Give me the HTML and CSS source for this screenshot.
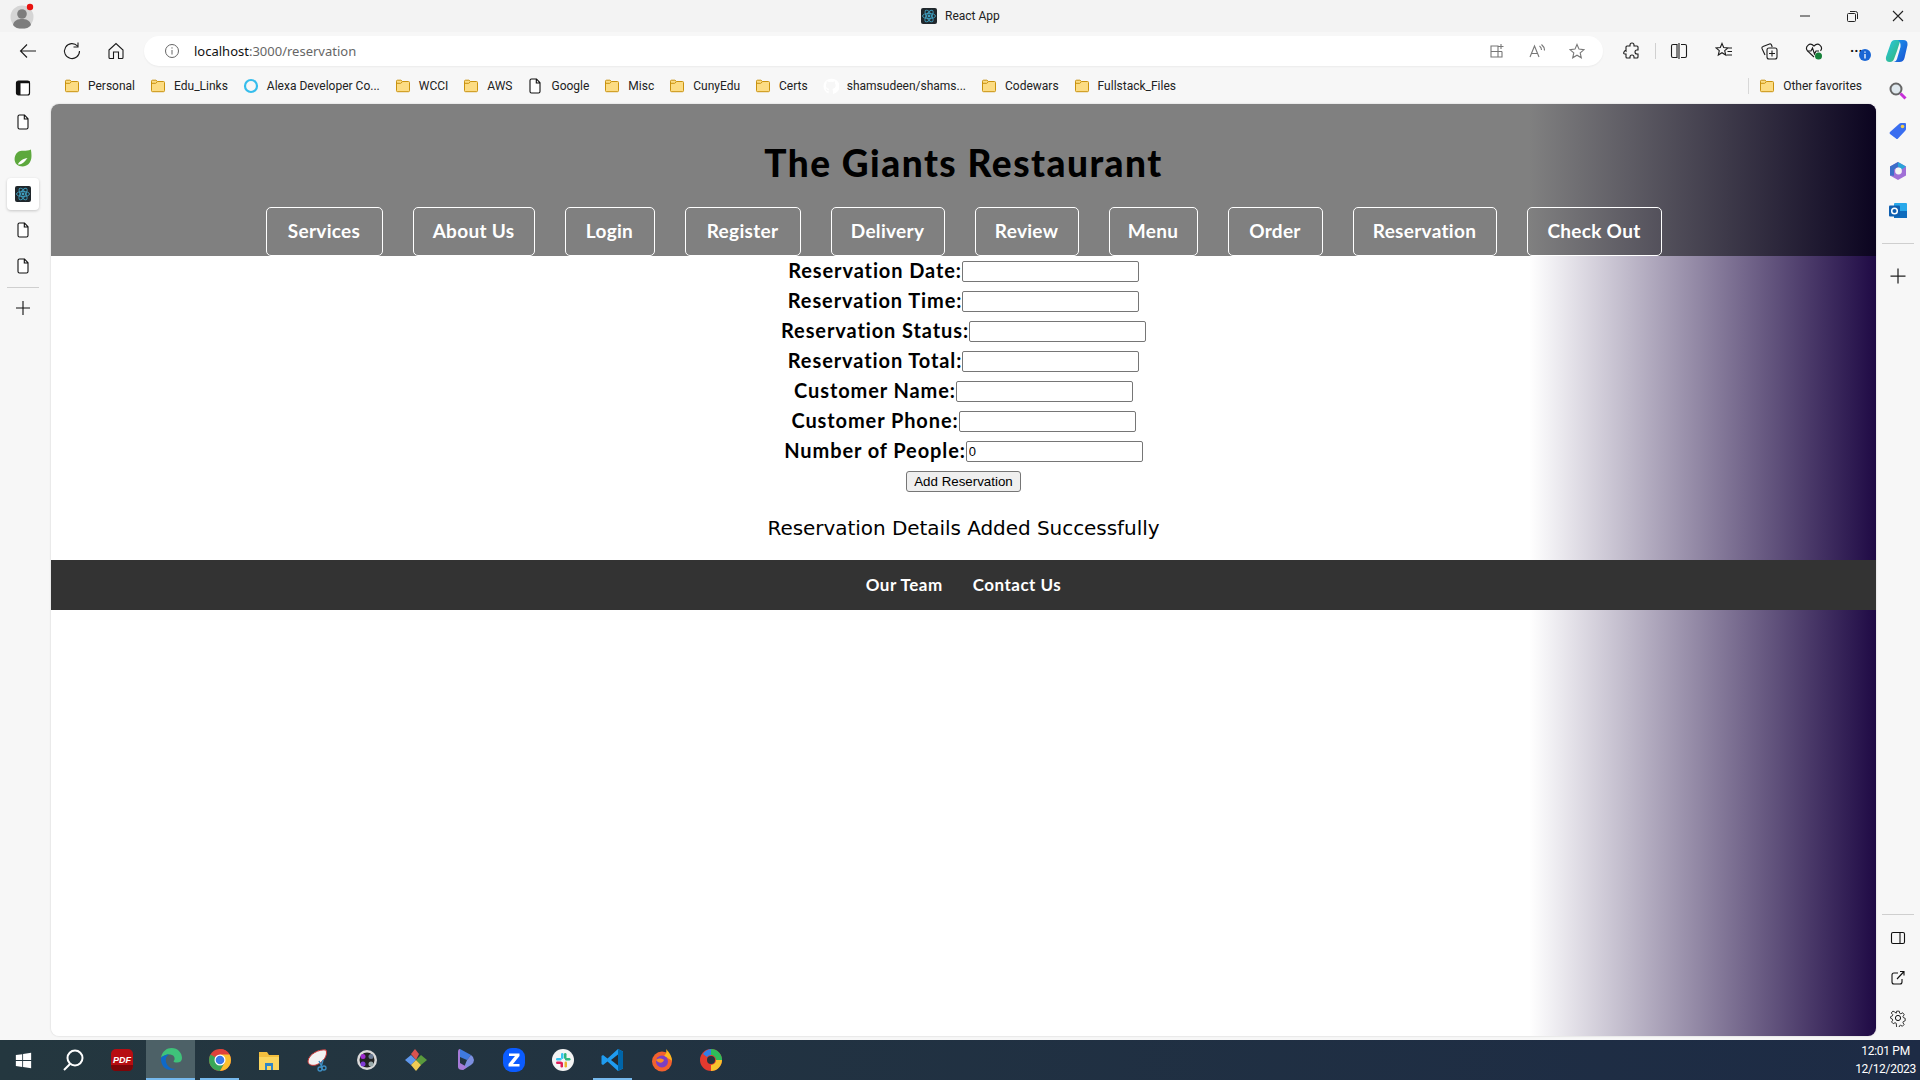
FILE: index.html
```html
<!DOCTYPE html>
<html>

<head>
    <meta charset="UTF-8">
    <title>React App</title>
    <link rel="stylesheet" href="styles.css">
</head>
<body>
    <svg width="0" height="0" class="defs">
        <symbol id="folder" viewBox="0 0 16 16">
            <path d="M1.5 3.2q0-1 1-1h3.4l1.6 1.3h6q1 0 1 1v8.2q0 1-1 1h-11q-1 0-1-1z" fill="#fcdc83" stroke="#c9920e"/>
            <path d="M1.5 5.300h4.200l1.800-1.600" fill="none" stroke="#c9920e"/>
        </symbol>
        <symbol id="page" viewBox="0 0 16 16">
            <path d="M3 2.500q0-1.500 1.500-1.500h5L13 4.800v8.700q0 1.500-1.500 1.500h-7Q3 15 3 13.500zM9.300 1v4H13" fill="#fff" stroke="#111" stroke-width="1.100"/>
        </symbol>
        <symbol id="react" viewBox="0 0 16 16">
            <rect width="16" height="16" rx="2" fill="#20272c"/>
            <g fill="none" stroke="#3f9fc0" stroke-width=".9">
                <ellipse cx="8" cy="8" rx="6.500" ry="2.600"/>
                <ellipse cx="8" cy="8" rx="6.500" ry="2.600" transform="rotate(60 8 8)"/>
                <ellipse cx="8" cy="8" rx="6.500" ry="2.600" transform="rotate(120 8 8)"/>
            </g>
            <circle cx="8" cy="8" r="1.400" fill="#3f9fc0"/>
        </symbol>
    </svg>

    <div class="window">
        <div class="titlebar">
            <svg class="avatar" viewBox="0 0 24 26">
                <circle cx="12" cy="14" r="11.500" fill="#d5d5d5"/>
                <circle cx="12" cy="11" r="4.800" fill="#7d7d7d"/>
                <path d="M3 22c1-5 5-6 9-6s8 1 9 6c-2 3-5 3.500-9 3.500s-7-.5-9-3.500z" fill="#7d7d7d"/>
                <circle cx="20" cy="4" r="3.200" fill="#e8120f"/>
            </svg>
            <div class="tab-title">
                <svg class="ico16"><use href="#react"/></svg>
                <span>React App</span>
            </div>
            <div class="win-btns">
                <svg class="ico16" viewBox="0 0 16 16"><path d="M3 8h10" stroke="#222" fill="none"/></svg>
                <svg class="ico16" viewBox="0 0 16 16"><path d="M4.500 5.500h6q1 0 1 1v6q0 1-1 1h-6q-1 0-1-1v-6q0-1 1-1zM6 3.500h5.500q2 0 2 2V11" stroke="#222" fill="none"/></svg>
                <svg class="ico16" viewBox="0 0 16 16"><path d="M3 3l10 10M13 3L3 13" stroke="#222" fill="none" stroke-width="1.100"/></svg>
            </div>
        </div>

        <div class="toolbar">
            <svg class="tb-ico" viewBox="0 0 20 20"><path d="M18 10H2.500M9 3.500L2.500 10 9 16.500" class="ln"/></svg>
            <svg class="tb-ico" viewBox="0 0 20 20"><path d="M15.500 5A7.500 7.500 0 1 0 17.500 10M16 1.500V6h-4.500" class="ln"/></svg>
            <svg class="tb-ico" viewBox="0 0 20 20"><path d="M3 9l7-6.500L17 9v7.500q0 1-1 1h-3.500V11h-5v6.500H4q-1 0-1-1z" class="ln"/></svg>
            <div class="addr">
                <svg class="ico16 info" viewBox="0 0 16 16"><circle cx="8" cy="8" r="6.500" fill="none" stroke="#666"/><path d="M8 7v4.500M8 4.300v1.300" stroke="#666" fill="none"/></svg>
                <span class="url"><span class="host">localhost</span>:3000/reservation</span>
                <svg class="ico16 addr-end" viewBox="0 0 16 16"><path d="M2 3h7v11H2zM2 8.500h11M9 8.500V14h4V8.500M12 1v5M9.500 3.500h5" class="ln gray"/></svg>
                <svg class="ico16 addr-end" viewBox="0 0 16 16"><path d="M1 14L5.500 3 10 14M2.800 10.500h5.500M10.500 3q2 1.500 2 4M12.500 1.500q3 2.500 3 6" class="ln gray"/></svg>
                <svg class="ico16 addr-end" viewBox="0 0 16 16"><path d="M8 1.500l2 4.600 5 .5-3.800 3.300 1.100 4.900L8 12.200l-4.300 2.600 1.100-4.900L1 6.600l5-.5z" class="ln gray"/></svg>
            </div>
            <div class="tb-right">
                <svg class="tb-ico s18" viewBox="0 0 18 18"><path d="M7 3q0-2 2-2t2 2v1h3q1 0 1 1v3h-1q-2 0-2 2t2 2h1v3q0 1-1 1h-3v-1q0-2-2-2t-2 2v1H4q-1 0-1-1v-3H2q-2 0-1-2t2-1V5q0-1 1-1h3z" class="ln"/></svg>
                <i class="tb-sep"></i>
                <svg class="tb-ico s18" viewBox="0 0 18 18"><path d="M7 2.500H3q-1.500 0-1.500 1.500v10q0 1.500 1.500 1.500h4zM11 2.500h4q1.500 0 1.500 1.500v10q0 1.500-1.500 1.500h-4M9 1v16" class="ln"/></svg>
                <svg class="tb-ico s18" viewBox="0 0 18 18"><path d="M7 1.500l1.700 4 4.300.4-3.300 2.800 1 4.300L7 10.700l-3.700 2.300 1-4.300L1 5.900l4.300-.4zM12 6h5M12.500 9.500H17M11.500 13H17" class="ln"/></svg>
                <svg class="tb-ico s18" viewBox="0 0 18 18"><path d="M5 13L2 6.500q-.5-1.500 1-2L9.500 2q1.500-.5 2 1l.7 2M7 8q0-2 2-2h6q2 0 2 2v7q0 2-2 2H9q-2 0-2-2zM12 8.500v6M9 11.500h6" class="ln"/></svg>
                <svg class="tb-ico s18" viewBox="0 0 18 18">
                    <path d="M9 15L2.500 8.800C-.5 5 4.500-.5 9 4c4.500-4.500 9.500 1 6.500 4.800" class="ln"/>
                    <path d="M2.500 9h3.500l1.500-3 2 6 1.500-3h3" class="ln"/>
                    <circle cx="13.500" cy="14" r="3.500" fill="#17813a"/>
                </svg>
                <div class="more">
                    <span>···</span>
                    <svg viewBox="0 0 12 12" class="more-badge"><circle cx="6" cy="6" r="6" fill="#1a66d4"/><path d="M6 5v4.500M6 2.500v1.200" stroke="#fff" fill="none" stroke-width="1.300"/></svg>
                </div>
                <svg class="copilot" viewBox="0 0 24 24">
                    <defs>
                        <linearGradient id="cp1" x1="0" y1="0" x2="1" y2="1"><stop offset="0" stop-color="#27c7e8"/><stop offset="1" stop-color="#35b56a"/></linearGradient>
                        <linearGradient id="cp2" x1="0" y1="0" x2="1" y2="1"><stop offset="0" stop-color="#1b9cf0"/><stop offset="1" stop-color="#1a4fd0"/></linearGradient>
                    </defs>
                    <path d="M5.500 5Q6.500 1 10 1h5.500L12 12l-3 8q-1 3-4 3-5 0-4-5z" fill="url(#cp1)"/>
                    <path d="M13 1h5q5 0 4.500 5l-3 13q-1 4-5 4H8q3 0 4-3l3.500-12Q16 3 13 1z" fill="url(#cp2)"/>
                </svg>
            </div>
        </div>

        <div class="lower">
            <div class="rail-left">
                <svg class="rail-ico rail-first" viewBox="0 0 16 16"><rect x="1.500" y="1" width="13" height="14" rx="2" fill="#fff" stroke="#111" stroke-width="1.200"/><path d="M1.500 3q0-2 2-2h11v2.300H5.500V15h-2q-2 0-2-2z" fill="#111"/></svg>
                <svg class="rail-ico"><use href="#page"/></svg>
                <svg class="rail-ico spring" viewBox="0 0 16 16"><path d="M15 .5c1 6 .8 10-2 12.800C10 16.300 5 16 2.300 13.500-.5 10.500.2 5.500 3 3c3-2.500 8-.5 12-2.500z" fill="#5da83d"/><path d="M3.500 13.500C5 10.500 8.500 8.500 12 8c-2 2.500-4 5.500-7.500 5.800z" fill="#fff"/></svg>
                <span class="rail-active"><svg class="rail-ico"><use href="#react"/></svg></span>
                <svg class="rail-ico"><use href="#page"/></svg>
                <svg class="rail-ico"><use href="#page"/></svg>
                <i class="rail-sep"></i>
                <svg class="rail-ico" viewBox="0 0 16 16"><path d="M8 1v14M1 8h14" stroke="#111" fill="none" stroke-width="1.100"/></svg>
            </div>

            <div class="center">
                <div class="bookmarks">
                    <a class="bm"><svg class="ico16"><use href="#folder"/></svg>Personal</a>
                    <a class="bm"><svg class="ico16"><use href="#folder"/></svg>Edu_Links</a>
                    <a class="bm"><svg class="ico16" viewBox="0 0 16 16"><circle cx="8" cy="8" r="6" fill="none" stroke="#35bdec" stroke-width="2.200"/></svg>Alexa Developer Co...</a>
                    <a class="bm"><svg class="ico16"><use href="#folder"/></svg>WCCI</a>
                    <a class="bm"><svg class="ico16"><use href="#folder"/></svg>AWS</a>
                    <a class="bm"><svg class="ico16"><use href="#page"/></svg>Google</a>
                    <a class="bm"><svg class="ico16"><use href="#folder"/></svg>Misc</a>
                    <a class="bm"><svg class="ico16"><use href="#folder"/></svg>CunyEdu</a>
                    <a class="bm"><svg class="ico16"><use href="#folder"/></svg>Certs</a>
                    <a class="bm"><svg class="ico16" viewBox="0 0 16 16"><path d="M8 .8a7.500 7.500 0 0 0-2.400 14.600v-2.500c-2 .4-2.500-1-2.700-1.500-.8-1-.1-1 .6-.7.5.3.9 1 1.100 1.200.7.900 1.500.5 1.100.3 0-.8.400-1.100.600-1.300-1.800-.2-3.400-1-3.400-3.600 0-.8.300-1.500.8-2 0-.3-.3-1 .1-2 0 0 .6-.2 2.100.8a7 7 0 0 1 3.800 0c1.500-1 2.100-.8 2.100-.8.400 1 .1 1.700.1 2 .5.500.8 1.200.8 2 0 2.600-1.600 3.400-3.400 3.600.3.300.6.700.6 1.500v3.500A7.500 7.500 0 0 0 8 .8z" fill="#fff"/></svg>shamsudeen/shams...</a>
                    <a class="bm"><svg class="ico16"><use href="#folder"/></svg>Codewars</a>
                    <a class="bm"><svg class="ico16"><use href="#folder"/></svg>Fullstack_Files</a>
                    <div class="bm-other">
                        <a class="bm"><svg class="ico16"><use href="#folder"/></svg>Other favorites</a>
                    </div>
                </div>

                <div class="page">
                    <div class="header">
                        <h1>The Giants Restaurant</h1>
                        <nav class="nav">
                            <a class="nav-btn">Services</a>
                            <a class="nav-btn">About Us</a>
                            <a class="nav-btn">Login</a>
                            <a class="nav-btn">Register</a>
                            <a class="nav-btn">Delivery</a>
                            <a class="nav-btn">Review</a>
                            <a class="nav-btn">Menu</a>
                            <a class="nav-btn">Order</a>
                            <a class="nav-btn">Reservation</a>
                            <a class="nav-btn">Check Out</a>
                        </nav>
                    </div>

                    <form class="res-form">
                        <div class="row"><label>Reservation Date:</label><input type="text"></div>
                        <div class="row"><label>Reservation Time:</label><input type="text"></div>
                        <div class="row"><label>Reservation Status:</label><input type="text"></div>
                        <div class="row"><label>Reservation Total:</label><input type="text"></div>
                        <div class="row"><label>Customer Name:</label><input type="text"></div>
                        <div class="row"><label>Customer Phone:</label><input type="text"></div>
                        <div class="row"><label>Number of People:</label><input type="text" value="0"></div>
                        <button type="button" class="add-btn">Add Reservation</button>
                    </form>
                    <p class="msg">Reservation Details Added Successfully</p>

                    <footer class="footer">
                        <a>Our Team</a>
                        <a>Contact Us</a>
                    </footer>
                </div>
            </div>

            <div class="rail-right">
                <svg class="rr-ico" viewBox="0 0 20 20"><circle cx="8" cy="8" r="5.500" fill="#dfe8ee" stroke="#666" stroke-width="2"/><path d="M12.500 12.500l5 5" stroke="#c62fd8" stroke-width="3" fill="none"/></svg>
                <svg class="rr-ico" viewBox="0 0 20 20"><path d="M2 11L11 3q1-1 2-1h4q1 0 1 1v5q0 1-1 2l-7 7.500q-1 1-2 0L2 13q-1-1 0-2z" fill="#3a6ef0"/><circle cx="14.500" cy="5.500" r="1.800" fill="#f3cd4a"/></svg>
                <svg class="rr-ico" viewBox="0 0 20 20"><path d="M10 1l8 4.500v9L10 19l-8-4.500v-9z" fill="#a06fd6"/><path d="M10 1l8 4.500-4 2.700L10 6z" fill="#2aa3d8"/><path d="M2 5.500L10 1v5L6 8.500v6.300l-4-.3z" fill="#3c6ec9"/><circle cx="10.500" cy="10" r="3.400" fill="#f4f4f4"/></svg>
                <svg class="rr-ico" viewBox="0 0 20 20"><rect x="6" y="2" width="13" height="15" rx="1" fill="#28a8ea"/><path d="M6 10h13v7H6z" fill="#0f6cbd"/><rect x="1" y="4.500" width="11" height="11" rx="1" fill="#0f5fb0"/><circle cx="6.500" cy="10" r="2.800" fill="none" stroke="#fff" stroke-width="1.500"/></svg>
                <i class="rail-sep wide"></i>
                <svg class="rr-ico" viewBox="0 0 16 16"><path d="M8 2v12M2 8h12" stroke="#222" fill="none"/></svg>
                <div class="rr-bottom">
                    <i class="rail-sep tight"></i>
                    <svg class="rr-ico s16" viewBox="0 0 16 16"><rect x="1.500" y="2.500" width="13" height="11" rx="1.500" fill="none" stroke="#111" stroke-width="1.100"/><path d="M10 2.500v11" stroke="#111" fill="none" stroke-width="1.100"/></svg>
                    <svg class="rr-ico s16" viewBox="0 0 16 16"><path d="M8 3H4q-2 0-2 2v7q0 2 2 2h6q2 0 2-2V9M7 9l7-7.500M10 1.500h4v4" fill="none" stroke="#111" stroke-width="1.100"/></svg>
                    <svg class="rr-ico s16 gear" viewBox="0 0 18 18"><circle cx="9" cy="9" r="2.600" fill="none" stroke="#111"/><path d="M7.500 1h3l.5 2.400 1.400.7 2.200-1.200 1.800 2.300-1.500 1.900.4 1.400 2.200 1v2.800l-2.200 1-.4 1.400 1.300 2-2 2.100-2-1.200-1.500.7-.4 2.200H7.500L7 15.300l-1.400-.7-2.100 1.200-2-2.100 1.300-2-.4-1.400-2-1V7.500l2.100-1 .4-1.400L1.100 3.200l2-2.300 2.200 1.200L7 3.400z" fill="none" stroke="#111" transform="translate(1.300 1.300) scale(.85)"/></svg>
                </div>
            </div>
        </div>

        <div class="taskbar">
            <svg class="tk-ico start" viewBox="0 0 20 20"><path d="M1 3.500l7.500-1v7H1zM9.500 2.300L19 1v8.500H9.500zM1 10.500h7.500v7l-7.500-1zM9.500 10.500H19V19l-9.500-1.300z" fill="#fff"/></svg>
            <span class="tk"><svg class="tk-ico" viewBox="0 0 24 24"><circle cx="14" cy="10" r="7.500" fill="none" stroke="#fff" stroke-width="2"/><path d="M9 16l-6 6" stroke="#fff" stroke-width="2" fill="none"/></svg></span>
            <span class="tk"><svg class="tk-ico" viewBox="0 0 24 24"><rect x="1" y="1" width="22" height="22" rx="5" fill="#b70d12"/><path d="M1 17h22v1q0 5-5 5H6q-5 0-5-5z" fill="#7c0508"/><text x="12" y="15" class="pdf">PDF</text></svg></span>
            <span class="tk tk-on">
                <svg class="tk-ico" viewBox="0 0 24 24"><path d="M2 11C3 4 8 1 12.500 1 19 1 23 6 23 11c0 3-2 4.500-5 4.500-2 0-3.500-.5-3.500-1.500 2-1 1.500-6-3-6.500C6 7 2.500 10 2 11z" fill="#3fc27a"/><path d="M2 11c.5-1 4-4 8.500-3.500-4 1-4.500 6-2.500 10 1.500 3 5 5 9 4-2 1-3.500 1.500-5.500 1.500C6 23 1.500 18 2 11z" fill="#0f69c8"/></svg>
            </span>
            <span class="tk tk-run">
                <svg class="tk-ico" viewBox="0 0 24 24"><circle cx="12" cy="12" r="11" fill="#d9473a"/><path d="M12 12L2.500 6.500A11 11 0 0 0 12 23l6-11z" fill="#3aa757"/><path d="M12 1a11 11 0 0 1 9.500 5.500H12L2.500 6.500z" fill="#e0403a"/><path d="M21.500 6.500A11 11 0 0 1 12 23l4.800-8.500L12 6.500z" fill="#fbc02d"/><circle cx="12" cy="12" r="5.500" fill="#fff"/><circle cx="12" cy="12" r="4.300" fill="#3b78e7"/></svg>
            </span>
            <span class="tk"><svg class="tk-ico" viewBox="0 0 24 24"><path d="M2 4h8l2 3h10v15H2z" fill="#f3bf3e"/><path d="M2 9h20v13H2z" fill="#fbd65f"/><path d="M8 15h8v7h-2v-4h-4v4H8z" fill="#2f86c7"/></svg></span>
            <span class="tk"><svg class="tk-ico" viewBox="0 0 24 24"><path d="M2 13C3 6 13 1 20 2c2 5-2 12-10 15-4 1-8 0-8-4z" fill="#f2f2f2" stroke="#c33" stroke-width="1"/><path d="M13 13l3 6M17 12l-2 7" stroke="#3d8fc4" stroke-width="1.500" fill="none"/><circle cx="14" cy="21" r="2" fill="none" stroke="#3d8fc4" stroke-width="1.300"/><circle cx="18" cy="20" r="2" fill="none" stroke="#3d8fc4" stroke-width="1.300"/></svg></span>
            <span class="tk"><svg class="tk-ico" viewBox="0 0 24 24"><circle cx="12" cy="12" r="10" fill="#d9d9d9"/><circle cx="12" cy="12" r="7.500" fill="#222"/><circle cx="8" cy="8.500" r="2.500" fill="#a02bd0"/><circle cx="16" cy="8.500" r="2.500" fill="#6c7d96"/><circle cx="8" cy="16" r="2.500" fill="#7f39d5"/><circle cx="16" cy="16" r="2.500" fill="#9aa"/></svg></span>
            <span class="tk"><svg class="tk-ico" viewBox="0 0 24 24"><path d="M12 12L7 6l4-5 4 5z" fill="#d9534f"/><path d="M12 12l5-5 6 5-6 5z" fill="#5a9a3c"/><path d="M12 12l-5-5-6 5 6 5z" fill="#5f97ec"/><path d="M12 12l5 5-5 6-5-6z" fill="#f0cb54"/></svg></span>
            <span class="tk"><svg class="tk-ico" viewBox="0 0 24 24"><path d="M7 1l11 6-4 5-7-3z" fill="#3f7be0"/><path d="M18 7q3 2 3 5t-3 5l-8 5 4-10z" fill="#7c8fe0"/><path d="M7 1Q5 1 5 4v15q0 3 5 3l4-3-7-4z" fill="#a67bd8"/></svg></span>
            <span class="tk"><svg class="tk-ico" viewBox="0 0 24 24"><rect x="1" y="0" width="22" height="24" rx="9" fill="#0b5cff"/><path d="M7 5.500h10.500v2.500L11 16h6.500v2.500H6.500V16L13 8H7z" fill="#fff"/></svg></span>
            <span class="tk"><svg class="tk-ico" viewBox="0 0 24 24"><circle cx="12" cy="12" r="11" fill="#f4f4f4"/><rect x="10" y="5" width="2.500" height="6" rx="1.200" fill="#36c5f0"/><rect x="5" y="10" width="5.500" height="2.500" rx="1.200" fill="#36c5f0"/><rect x="13" y="5" width="2.500" height="6" rx="1.200" fill="#2eb67d"/><rect x="14" y="10" width="5.500" height="2.500" rx="1.200" fill="#2eb67d"/><rect x="13.500" y="13.500" width="2.500" height="6" rx="1.200" fill="#ecb22e"/><rect x="5" y="13.500" width="6" height="2.500" rx="1.200" fill="#e01e5a"/><rect x="9.500" y="14" width="2.500" height="5.500" rx="1.200" fill="#e01e5a"/></svg></span>
            <span class="tk tk-run">
                <svg class="tk-ico" viewBox="0 0 24 24"><path d="M17 1l5 2.500v17L17 23 6.500 13.500 2 17l-1.500-1v-8L2 7l4.500 3.500z" fill="#1f9cf0"/><path d="M17 6.500L10 12l7 5.500z" fill="#24292e"/><path d="M17 1l5 2.500v17L17 23z" fill="#0065a9"/></svg>
            </span>
            <span class="tk"><svg class="tk-ico" viewBox="0 0 24 24"><circle cx="12" cy="13.500" r="10" fill="#f2612e"/><path d="M16 1c3 3 6 7 6 12-3-3-5-3-8-5 2-2 3-4 2-7z" fill="#ffb61e"/><circle cx="12" cy="13.500" r="6" fill="#7b3fc4"/><path d="M6 12c2-2 6-2 8 0-1 3-5 4-8 0z" fill="#fb8f22"/></svg></span>
            <span class="tk"><svg class="tk-ico" viewBox="0 0 24 24"><circle cx="12" cy="12" r="11" fill="#e33a2f"/><path d="M12 1a11 11 0 0 1 11 11h-6a5 5 0 0 0-5-5z" fill="#2dbd5a"/><path d="M23 12a11 11 0 0 1-11 11v-6a5 5 0 0 0 5-5z" fill="#f7c32d"/><path d="M4 6a11 11 0 0 1 8-5v6a5 5 0 0 0-4 2z" fill="#2f7fe8"/><circle cx="12" cy="12" r="4" fill="#24343d"/></svg></span>
            <div class="clock">
                <span>12:01 PM</span>
                <span>12/12/2023</span>
            </div>
        </div>
    </div>
</body>

</html>
```

FILE: styles.css
```css
*{
    box-sizing:border-box;
}
body{
    margin:0;
    font-family:Roboto,sans-serif;
}
.defs{
    position:absolute;
}
.window{
    width:1920px;
    height:1080px;
    display:flex;
    flex-direction:column;
    background:#f7f7f7;
    overflow:hidden;
}
.ln{
    fill:none;
    stroke:#1c1c1c;
    stroke-width:1.1;
}
.gray{
    stroke:#777;
}
.ico16{
    width:16px;
    height:16px;
    flex:none;
}

/* title bar */
.titlebar{
    height:32px;
    flex:none;
    background:#f3f3f3;
    display:flex;
    align-items:center;
    position:relative;
}
.avatar{
    width:24px;
    height:26px;
    margin-left:10px;
}
.tab-title{
    position:absolute;
    left:921px;
    top:8px;
    display:flex;
    align-items:center;
    gap:8px;
    font-size:12px;
    color:#222;
}
.win-btns{
    margin-left:auto;
    width:138px;
    display:flex;
    justify-content:space-between;
    padding:0 14px 0 15px;
    gap:30px;
}

/* toolbar */
.toolbar{
    height:38px;
    flex:none;
    display:flex;
    align-items:center;
    background:#f7f7f7;
    padding-left:18px;
    gap:24px;
}
.tb-ico{
    width:20px;
    height:20px;
    flex:none;
}
.tb-ico.s18{
    width:18px;
    height:18px;
}
.addr{
    width:1459px;
    height:30px;
    margin-left:-6px;
    background:#fff;
    border-radius:15px;
    display:flex;
    align-items:center;
    padding-left:20px;
    padding-right:18px;
    box-shadow:0 1px 2px #0000000d;
}
.url{
    margin-left:14px;
    font-family:"Noto Sans",sans-serif;
    font-size:13px;
    color:#666;
    flex:1;
}
.host{
    color:#111;
}
.addr-end{
    margin-left:24px;
}
.tb-right{
    margin-left:-4px;
    display:flex;
    align-items:center;
    gap:27px;
}
.tb-sep{
    width:1px;
    height:16px;
    background:#d0d0d0;
    margin:0 -13px;
}
.more{
    position:relative;
    width:18px;
    font-size:14px;
    font-weight:700;
    color:#111;
    line-height:14px;
    margin-right:-10px;
}
.more-badge{
    position:absolute;
    left:9px;
    top:5px;
    width:12px;
    height:12px;
}
.copilot{
    width:24px;
    height:24px;
    flex:none;
}

/* everything under the toolbar, the rails reach up beside the bookmarks */
.lower{
    flex:1;
    min-height:0;
    display:flex;
}
.rail-left{
    width:51px;
    flex:none;
    display:flex;
    flex-direction:column;
    align-items:center;
    padding:10px 5px 0 0;
    gap:20px;
}
.rail-ico{
    width:16px;
    height:16px;
    flex:none;
}
.rail-first{
    margin-bottom:-2px;
}
.rail-ico.spring{
    width:18px;
    height:18px;
    margin:-1px 0;
}
.rail-active{
    width:32px;
    height:32px;
    margin:-8px 0;
    background:#fff;
    border-radius:4px;
    box-shadow:0 1px 3px #0003;
    display:flex;
    align-items:center;
    justify-content:center;
}
.rail-sep{
    width:32px;
    height:1px;
    background:#cfcfcf;
    flex:none;
    display:block;
    margin:-7px 0 -8px;
}
.rail-sep.wide{
    margin:2px 0;
}
.rail-sep.tight{
    margin:0 0 -9px;
}
.center{
    flex:1;
    min-width:0;
    display:flex;
    flex-direction:column;
}
.rail-right{
    width:44px;
    flex:none;
    display:flex;
    flex-direction:column;
    align-items:center;
    padding-top:11px;
    gap:20px;
}
.rr-ico{
    width:20px;
    height:20px;
    flex:none;
}
.rr-ico.s16{
    width:16px;
    height:16px;
}
.rr-ico.gear{
    width:18px;
    height:18px;
    margin:-1px 0;
}
.rr-bottom{
    margin-top:auto;
    margin-bottom:14px;
    display:flex;
    flex-direction:column;
    align-items:center;
    gap:24px;
}

/* bookmarks */
.bookmarks{
    height:34px;
    flex:none;
    display:flex;
    align-items:center;
    padding:0 14px 2px 13px;
    gap:15px;
}
.bm{
    display:flex;
    align-items:center;
    gap:8px;
    font-size:12px;
    color:#222;
    white-space:nowrap;
}
.bm-other{
    margin-left:auto;
    padding-left:10px;
    border-left:1px solid #d8d8d8;
}

/* the app */
.page{
    flex:1;
    margin-bottom:4px;
    border-radius:8px;
    overflow:hidden;
    background:linear-gradient(to right,#fff 81%,#1f0a45 100%);
    box-shadow:0 0 2px #0003;
}
.header{
    height:152px;
    background:linear-gradient(to right,#808080 81%,#0b0420 100%);
    text-align:center;
    overflow:hidden;
}
h1{
    margin:0;
    padding-top:37px;
    font-family:Lato,sans-serif;
    font-weight:900;
    font-size:37px;
    line-height:44px;
    letter-spacing:1.500px;
    color:#000;
}
.nav{
    margin-top:22px;
    display:grid;
    grid-template-columns:117px 122px 90px 116px 114px 104px 89px 95px 144px 135px;
    justify-content:center;
    gap:30px;
}
.nav-btn{
    height:49px;
    padding-bottom:2px;
    display:flex;
    align-items:center;
    justify-content:center;
    border:1px solid #fff;
    border-radius:5px;
    font-family:Lato,sans-serif;
    font-weight:700;
    font-size:19px;
    letter-spacing:.3px;
    color:#fff;
}
.res-form{
    display:flex;
    flex-direction:column;
    align-items:center;
}
.row{
    height:30px;
    display:flex;
    align-items:center;
}
.row label{
    padding-bottom:3px;
    font-family:Lato,sans-serif;
    font-weight:700;
    font-size:20px;
    letter-spacing:.9px;
    color:#000;
}
.row input{
    width:177px;
    height:21px;
    border:1px solid #767676;
    border-radius:2px;
    padding:1px 2px;
    font-family:"Liberation Sans",sans-serif;
    font-size:13px;
    background:#fff;
}
.add-btn{
    margin-top:5px;
    height:21px;
    width:115px;
    padding:0;
    border:1px solid #767676;
    border-radius:3px;
    background:#efefef;
    font-family:"Liberation Sans",sans-serif;
    font-size:13.333px;
    color:#000;
}
.msg{
    margin:0;
    padding-top:23px;
    height:68px;
    text-align:center;
    font-family:"DejaVu Sans",sans-serif;
    font-size:20px;
    line-height:26px;
    letter-spacing:-.05px;
    color:#000;
}
.footer{
    height:50px;
    padding-bottom:2px;
    background:#333;
    display:flex;
    justify-content:center;
    align-items:center;
    gap:30px;
    font-family:Lato,sans-serif;
    font-weight:700;
    font-size:17px;
    letter-spacing:.5px;
    color:#fff;
}

/* windows taskbar */
.taskbar{
    height:40px;
    flex:none;
    background:linear-gradient(to right,#24373f,#1d2b45);
    display:flex;
    align-items:center;
    padding-left:15px;
}
.tk-ico{
    width:24px;
    height:24px;
    flex:none;
}
.tk-ico.start{
    width:17px;
    height:17px;
    margin-right:16px;
}
.tk{
    width:49.100px;
    height:40px;
    position:relative;
    display:flex;
    align-items:center;
    justify-content:center;
    flex:none;
}
.tk-on{
    background:#4d6167;
    border-bottom:2px solid #76b9ed;
}
.tk-run::after{
    content:"";
    position:absolute;
    left:5px;
    right:5px;
    bottom:0;
    height:2px;
    background:#76b9ed;
}
.pdf{
    font-family:"Liberation Sans",sans-serif;
    font-weight:700;
    font-style:italic;
    font-size:9px;
    fill:#fff;
    text-anchor:middle;
}
.clock{
    margin-left:auto;
    padding-right:4px;
    display:flex;
    flex-direction:column;
    align-items:center;
    font-size:12px;
    line-height:18px;
    letter-spacing:-.3px;
    color:#fff;
}
```
